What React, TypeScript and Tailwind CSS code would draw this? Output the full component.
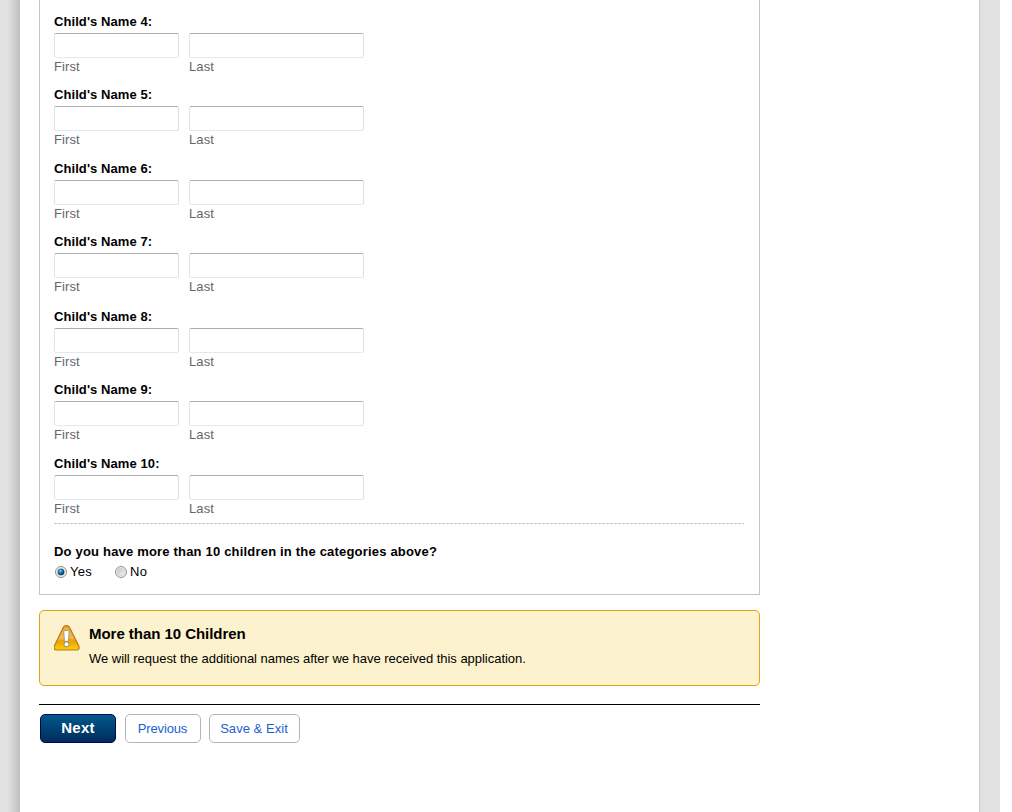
import { useState } from 'react';

// Row heights vary by a pixel or two down the list
const children = [
  { number: 4, height: 'h-[73px]' },
  { number: 5, height: 'h-[74px]' },
  { number: 6, height: 'h-[73px]' },
  { number: 7, height: 'h-[75px]' },
  { number: 8, height: 'h-[73px]' },
  { number: 9, height: 'h-[74px]' },
  { number: 10, height: 'h-[60px]' },
];

const inputClass =
  'block h-[25px] rounded-[2px] border border-[#e2e3ea] border-t-[#abadb3] border-r-[#dbdfe6] border-b-[#e3e9ef] bg-white px-1 outline-none';

interface NameFieldProps {
  label: string;
  width: string;
}

function NameField({ label, width }: NameFieldProps) {
  return (
    <label className={width}>
      <input type="text" className={`${inputClass} w-full`} />
      <span className="block pt-px leading-4 tracking-[0.1px] text-[#666]">{label}</span>
    </label>
  );
}

interface RadioProps {
  label: string;
  checked: boolean;
  onChange: () => void;
}

function Radio({ label, checked, onChange }: RadioProps) {
  return (
    <label className="flex w-[60px] items-center">
      <input type="radio" name="more" checked={checked} onChange={onChange} className="sr-only" />
      <svg width="14" height="14" viewBox="0 0 14 14" className="mr-[2px]">
        <defs>
          <linearGradient id="radioFace" x1="0" y1="0" x2="1" y2="1">
            <stop offset="0" stopColor="#bfc4c9" />
            <stop offset="1" stopColor="#f7f7f7" />
          </linearGradient>
          <radialGradient id="radioDot" cx="0.4" cy="0.35" r="0.65">
            <stop offset="0" stopColor="#8fdcf8" />
            <stop offset="0.4" stopColor="#1c80b8" />
            <stop offset="1" stopColor="#0b3050" />
          </radialGradient>
        </defs>
        <circle cx="7" cy="7" r="5.5" fill="#f4f4f4" stroke="#8e8f8f" />
        <circle cx="7" cy="7" r="3.8" fill="url(#radioFace)" stroke="#c3c8cc" strokeWidth="0.6" />
        {checked && <circle cx="7" cy="7" r="3.3" fill="url(#radioDot)" />}
      </svg>
      <span className="tracking-[0.3px]">{label}</span>
    </label>
  );
}

function WarningIcon() {
  return (
    <svg width="26" height="26" viewBox="0 0 26 26" className="shrink-0">
      <defs>
        <linearGradient id="warn" x1="0" y1="0" x2="0" y2="1">
          <stop offset="0" stopColor="#e9a01a" />
          <stop offset="0.5" stopColor="#f0b03c" />
          <stop offset="0.62" stopColor="#e9a00c" />
          <stop offset="1" stopColor="#fdd000" />
        </linearGradient>
      </defs>
      <path
        d="M9.4 2.2Q10.3.6 12.4.6Q14.5.6 15.4 2.2L24.6 20.4Q26.2 24.9 22.4 25H2.6Q-1 24.9.6 20.4Z"
        fill="url(#warn)"
        stroke="#b9791a"
        strokeWidth="1.2"
      />
      <path d="M10.4 3Q12.4.8 14.4 3L20 14Q13 12.6 4 16Z" fill="#fff" opacity="0.14" />
      <path
        d="M9.8 6.6Q9.8 5.6 10.8 5.6H14.1Q15.1 5.6 15.1 6.6L14.6 15.4Q14.4 16.4 12.5 16.4Q10.6 16.4 10.4 15.4Z"
        fill="#fff"
        stroke="#97896f"
        strokeWidth="0.8"
      />
      <circle cx="12.5" cy="19.3" r="2.5" fill="#fff" stroke="#77705f" strokeWidth="0.8" />
    </svg>
  );
}

export default function App() {
  const [more, setMore] = useState(true);

  return (
    <div className="flex h-[812px] w-[1012px] overflow-hidden bg-white font-['Liberation_Sans',Arial,sans-serif] text-[13px] text-black">
      <div className="w-5 shrink-0 bg-linear-to-r from-[#e1e1e1] from-40% to-[#bfbfbf]" />

      <main className="w-[959px] shrink-0 pl-[19px]">
        <div className="w-[721px]">
          {/* Names and follow-up question */}
          <section className="h-[595px] border border-t-0 border-[#c4c4c4] pt-[14px] pl-[14px]">
            {children.map((child) => (
              <div key={child.number} className={child.height}>
                <div className="h-[19px] leading-4 font-bold tracking-[0.08px]">Child's Name {child.number}:</div>
                <div className="flex gap-[10px]">
                  <NameField label="First" width="w-[125px]" />
                  <NameField label="Last" width="w-[175px]" />
                </div>
              </div>
            ))}

            <div className="mt-[7px] h-px w-[690px] bg-[repeating-linear-gradient(90deg,#c4c4c4_0_3px,transparent_3px_4px)]" />

            <div className="mt-[20px] leading-4 font-bold tracking-[0.19px]">
              Do you have more than 10 children in the categories above?
            </div>
            <div className="mt-1 flex leading-4">
              <Radio label="Yes" checked={more} onChange={() => setMore(true)} />
              <Radio label="No" checked={!more} onChange={() => setMore(false)} />
            </div>
          </section>

          {/* Warning */}
          <section className="mt-[15px] flex h-[76px] rounded-[5px] border border-[#dfa50e] bg-[#fcf2cd] pt-[14px] pl-[14px]">
            <WarningIcon />
            <div className="ml-[9px]">
              <h2 className="text-[15px] leading-[18px] font-bold tracking-[-0.04px]">More than 10 Children</h2>
              <p className="mt-2 leading-4 tracking-[-0.03px]">
                We will request the additional names after we have received this application.
              </p>
            </div>
          </section>

          {/* Actions */}
          <div className="mt-[18px] flex border-t border-black pt-[9px] pl-px">
            <button className="h-[29px] w-[76px] rounded-[5px] border border-[#00084f] bg-linear-to-b from-[#00598f] to-[#002c5a] pb-[2px] text-[15px] leading-[25px] font-bold tracking-[0.3px] text-white">
              Next
            </button>
            <button className="ml-[9px] h-[29px] w-[76px] rounded-[5px] border border-[#b5b5b5] bg-white pr-px tracking-[-0.15px] text-[#1c5fd0]">
              Previous
            </button>
            <button className="ml-2 h-[29px] w-[91px] rounded-[5px] border border-[#b5b5b5] bg-white pr-px tracking-[0.05px] text-[#1c5fd0]">
              Save &amp; Exit
            </button>
          </div>
        </div>
      </main>

      <div className="w-[21px] shrink-0 border-l border-[#c9c9c9] bg-[#e1e1e1]" />
    </div>
  );
}
